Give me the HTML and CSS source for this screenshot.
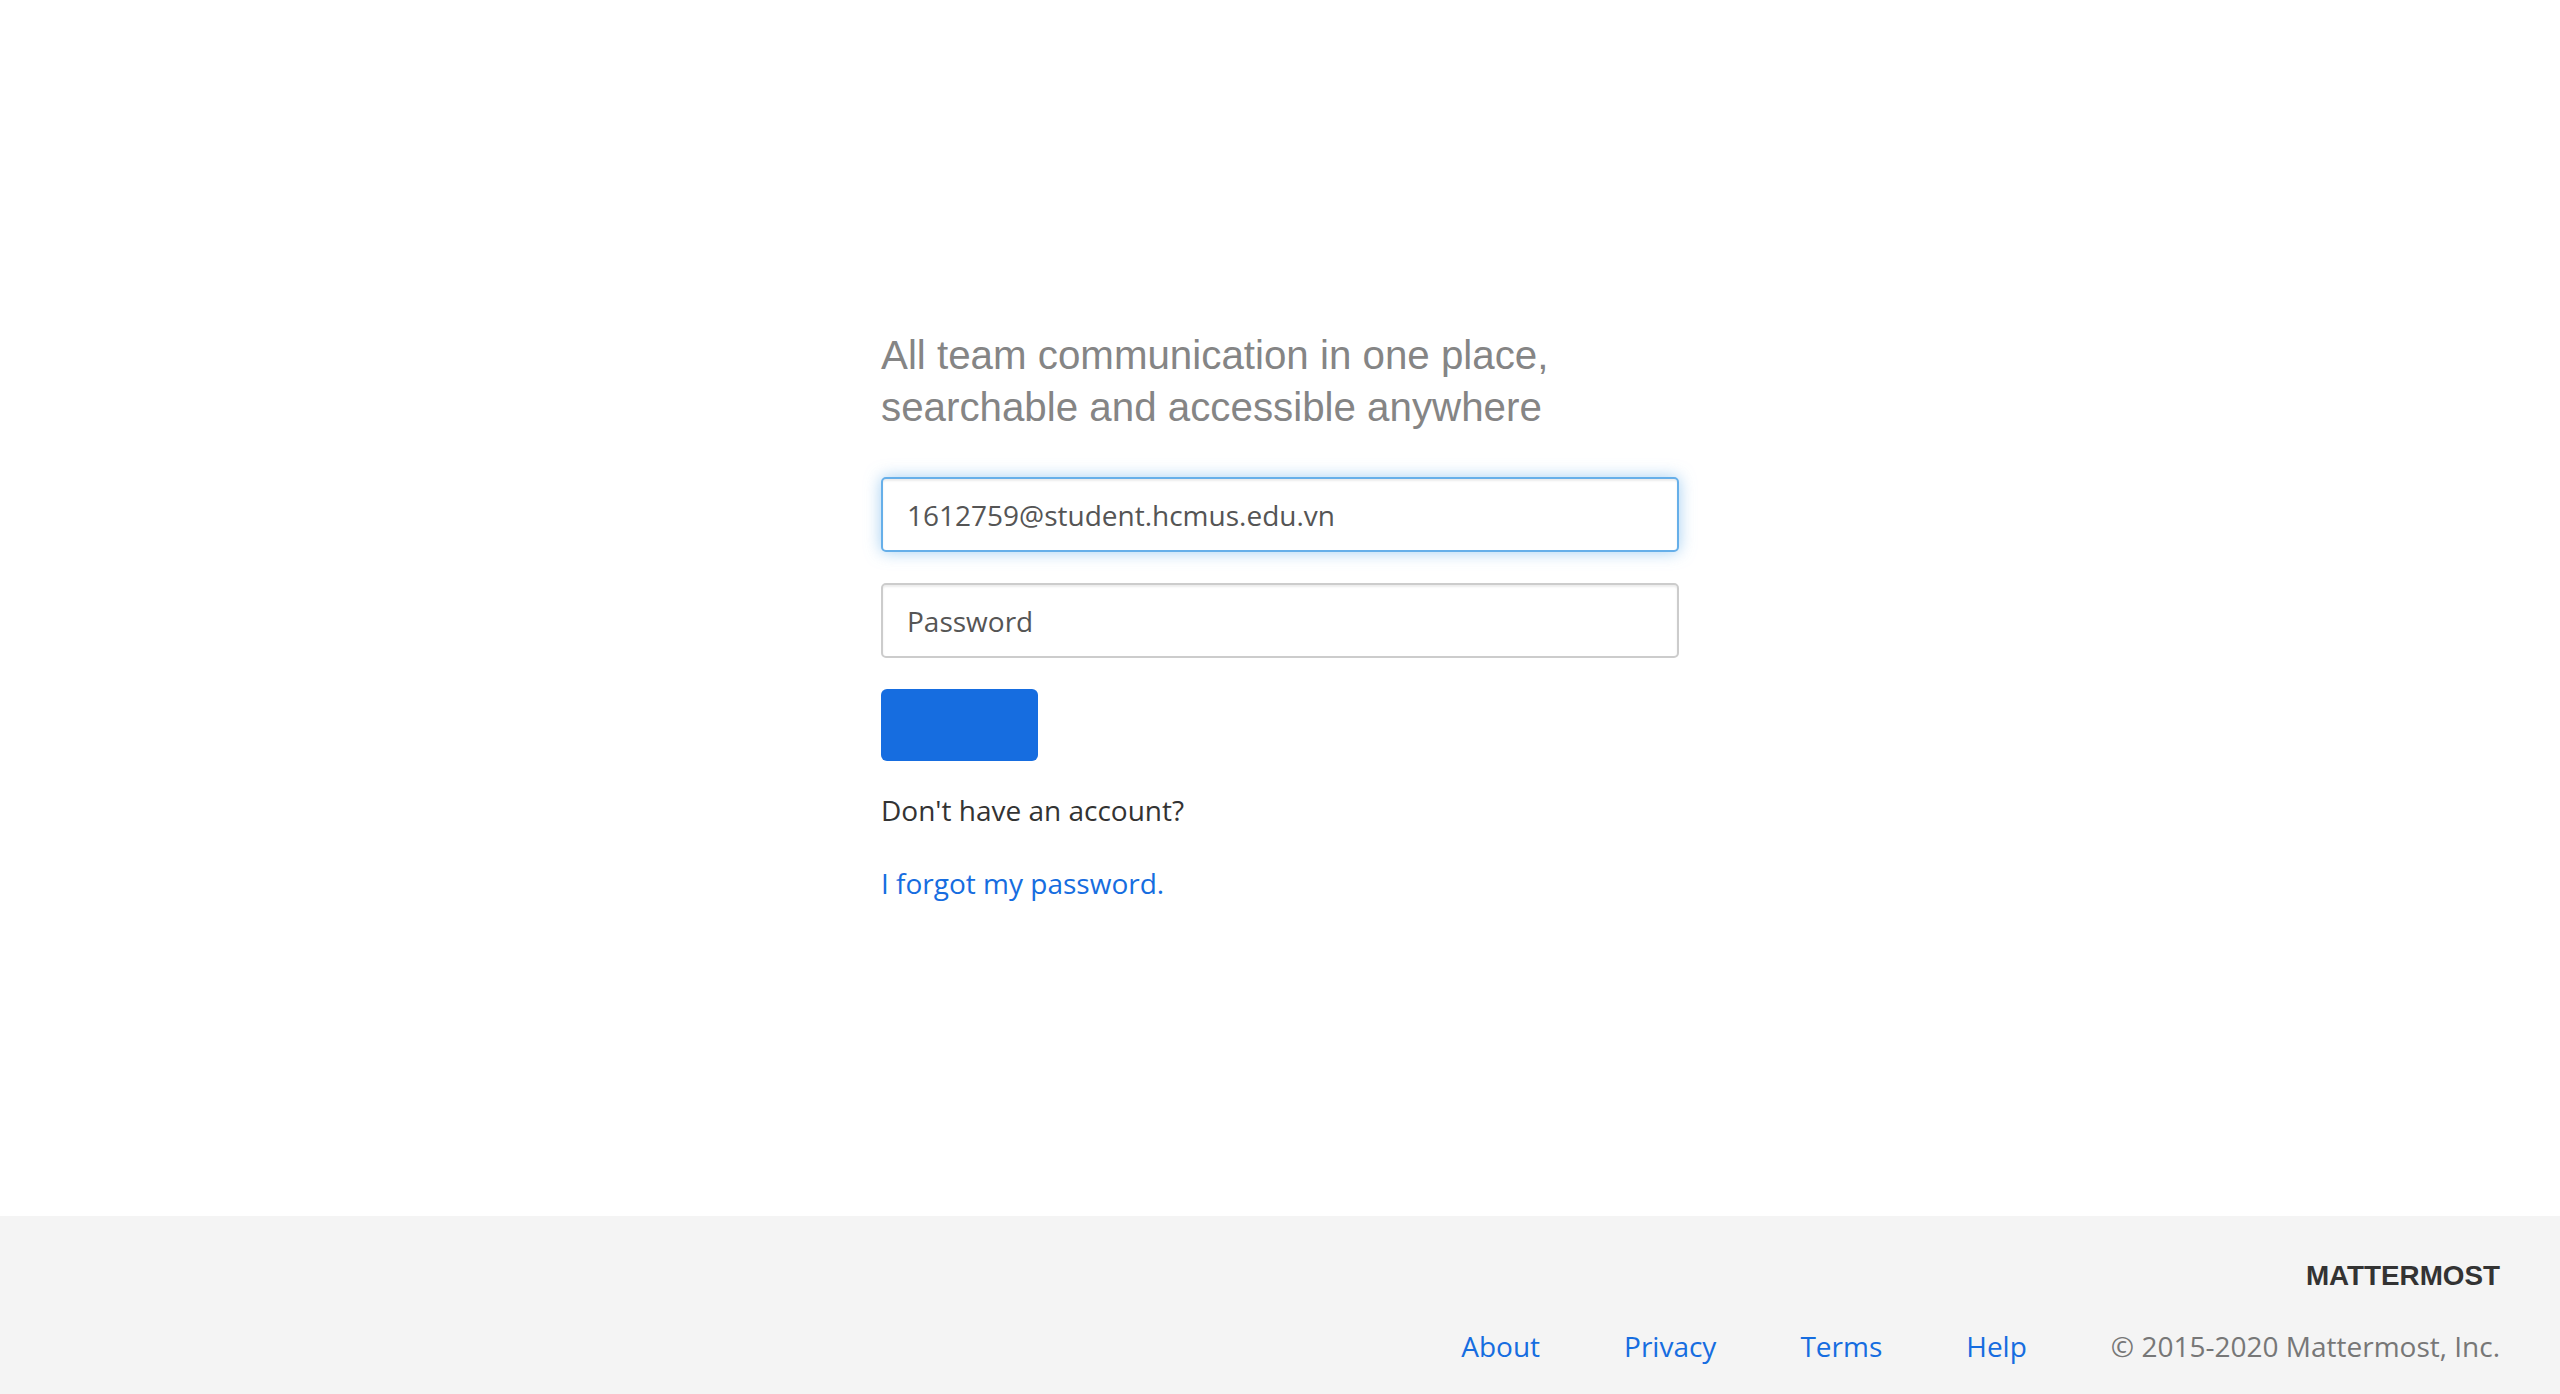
FILE: index.html
```html
<!DOCTYPE html>
<html lang="en">
<head>
<meta charset="utf-8">
<title>Mattermost</title>
<link rel="stylesheet" href="styles.css">
</head>
<body>
<main class="main">
  <div class="login">
    <h3 class="subtitle">All team communication in one place,<br>searchable and accessible anywhere</h3>
    <form class="form">
      <input class="field field--focus" type="text" value="1612759@student.hcmus.edu.vn">
      <input class="field" type="password" placeholder="Password">
      <button class="btn" type="button"></button>
    </form>
    <p class="signup">Don't have an account?</p>
    <a class="forgot" href="#">I forgot my password.</a>
  </div>
</main>
<footer class="footer">
  <div class="brand">MATTERMOST</div>
  <div class="links">
    <a href="#">About</a>
    <a href="#">Privacy</a>
    <a href="#">Terms</a>
    <a href="#">Help</a>
    <span class="copy">© 2015-2020 Mattermost, Inc.</span>
  </div>
</footer>
</body>
</html>
```
FILE: styles.css
```css
* { box-sizing: border-box; }
html, body { margin: 0; padding: 0; }
body {
  min-height: 1394px;
  display: flex;
  flex-direction: column;
  background: #fff;
  font-family: "Open Sans", "Liberation Sans", sans-serif;
  font-size: 28px;
  color: #333;
}
.main {
  flex: 1;
  display: flex;
  justify-content: center;
}
.login {
  width: 798px;
  padding-top: 330px;
  display: flex;
  flex-direction: column;
}
.subtitle {
  margin: 0;
  font-family: "Liberation Sans", Arial, sans-serif;
  font-weight: 400;
  font-size: 40.3px;
  line-height: 52px;
  color: #858585;
}
.form {
  margin-top: 43px;
  display: flex;
  flex-direction: column;
}
.field {
  display: block;
  width: 100%;
  height: 75px;
  margin: 0 0 31px;
  padding: 0 24px;
  border: 2px solid #cccccc;
  border-radius: 5px;
  font-family: "Open Sans", sans-serif;
  font-size: 28px;
  color: #555;
  background: #fff;
  outline: none;
  box-shadow: inset 0 2px 2px rgba(0,0,0,0.075);
}
.field::placeholder { color: #555; opacity: 1; }
.field--focus {
  border-color: #66afe9;
  box-shadow: inset 0 2px 2px rgba(0,0,0,0.075), 0 0 16px rgba(102,175,233,0.6);
}
.btn {
  width: 157px;
  height: 72px;
  border: none;
  border-radius: 6px;
  background: #166de0;
  padding: 0;
}
.signup {
  margin: 29px 0 0;
  line-height: 40px;
  color: #333;
}
.forgot {
  margin-top: 33px;
  line-height: 40px;
  color: #166de0;
  text-decoration: none;
  align-self: flex-start;
}
.footer {
  height: 178px;
  background: #f4f4f4;
  padding: 43px 60px 0 0;
  display: flex;
  flex-direction: column;
  align-items: flex-end;
}
.brand {
  font-family: "Liberation Sans", Arial, sans-serif;
  font-weight: 700;
  font-size: 27.8px;
  line-height: 34px;
  color: #333;
}
.links {
  margin-top: 33px;
  display: flex;
  gap: 84px;
  line-height: 40px;
}
.links a {
  color: #166de0;
  text-decoration: none;
}
.copy { color: #777; }
```
